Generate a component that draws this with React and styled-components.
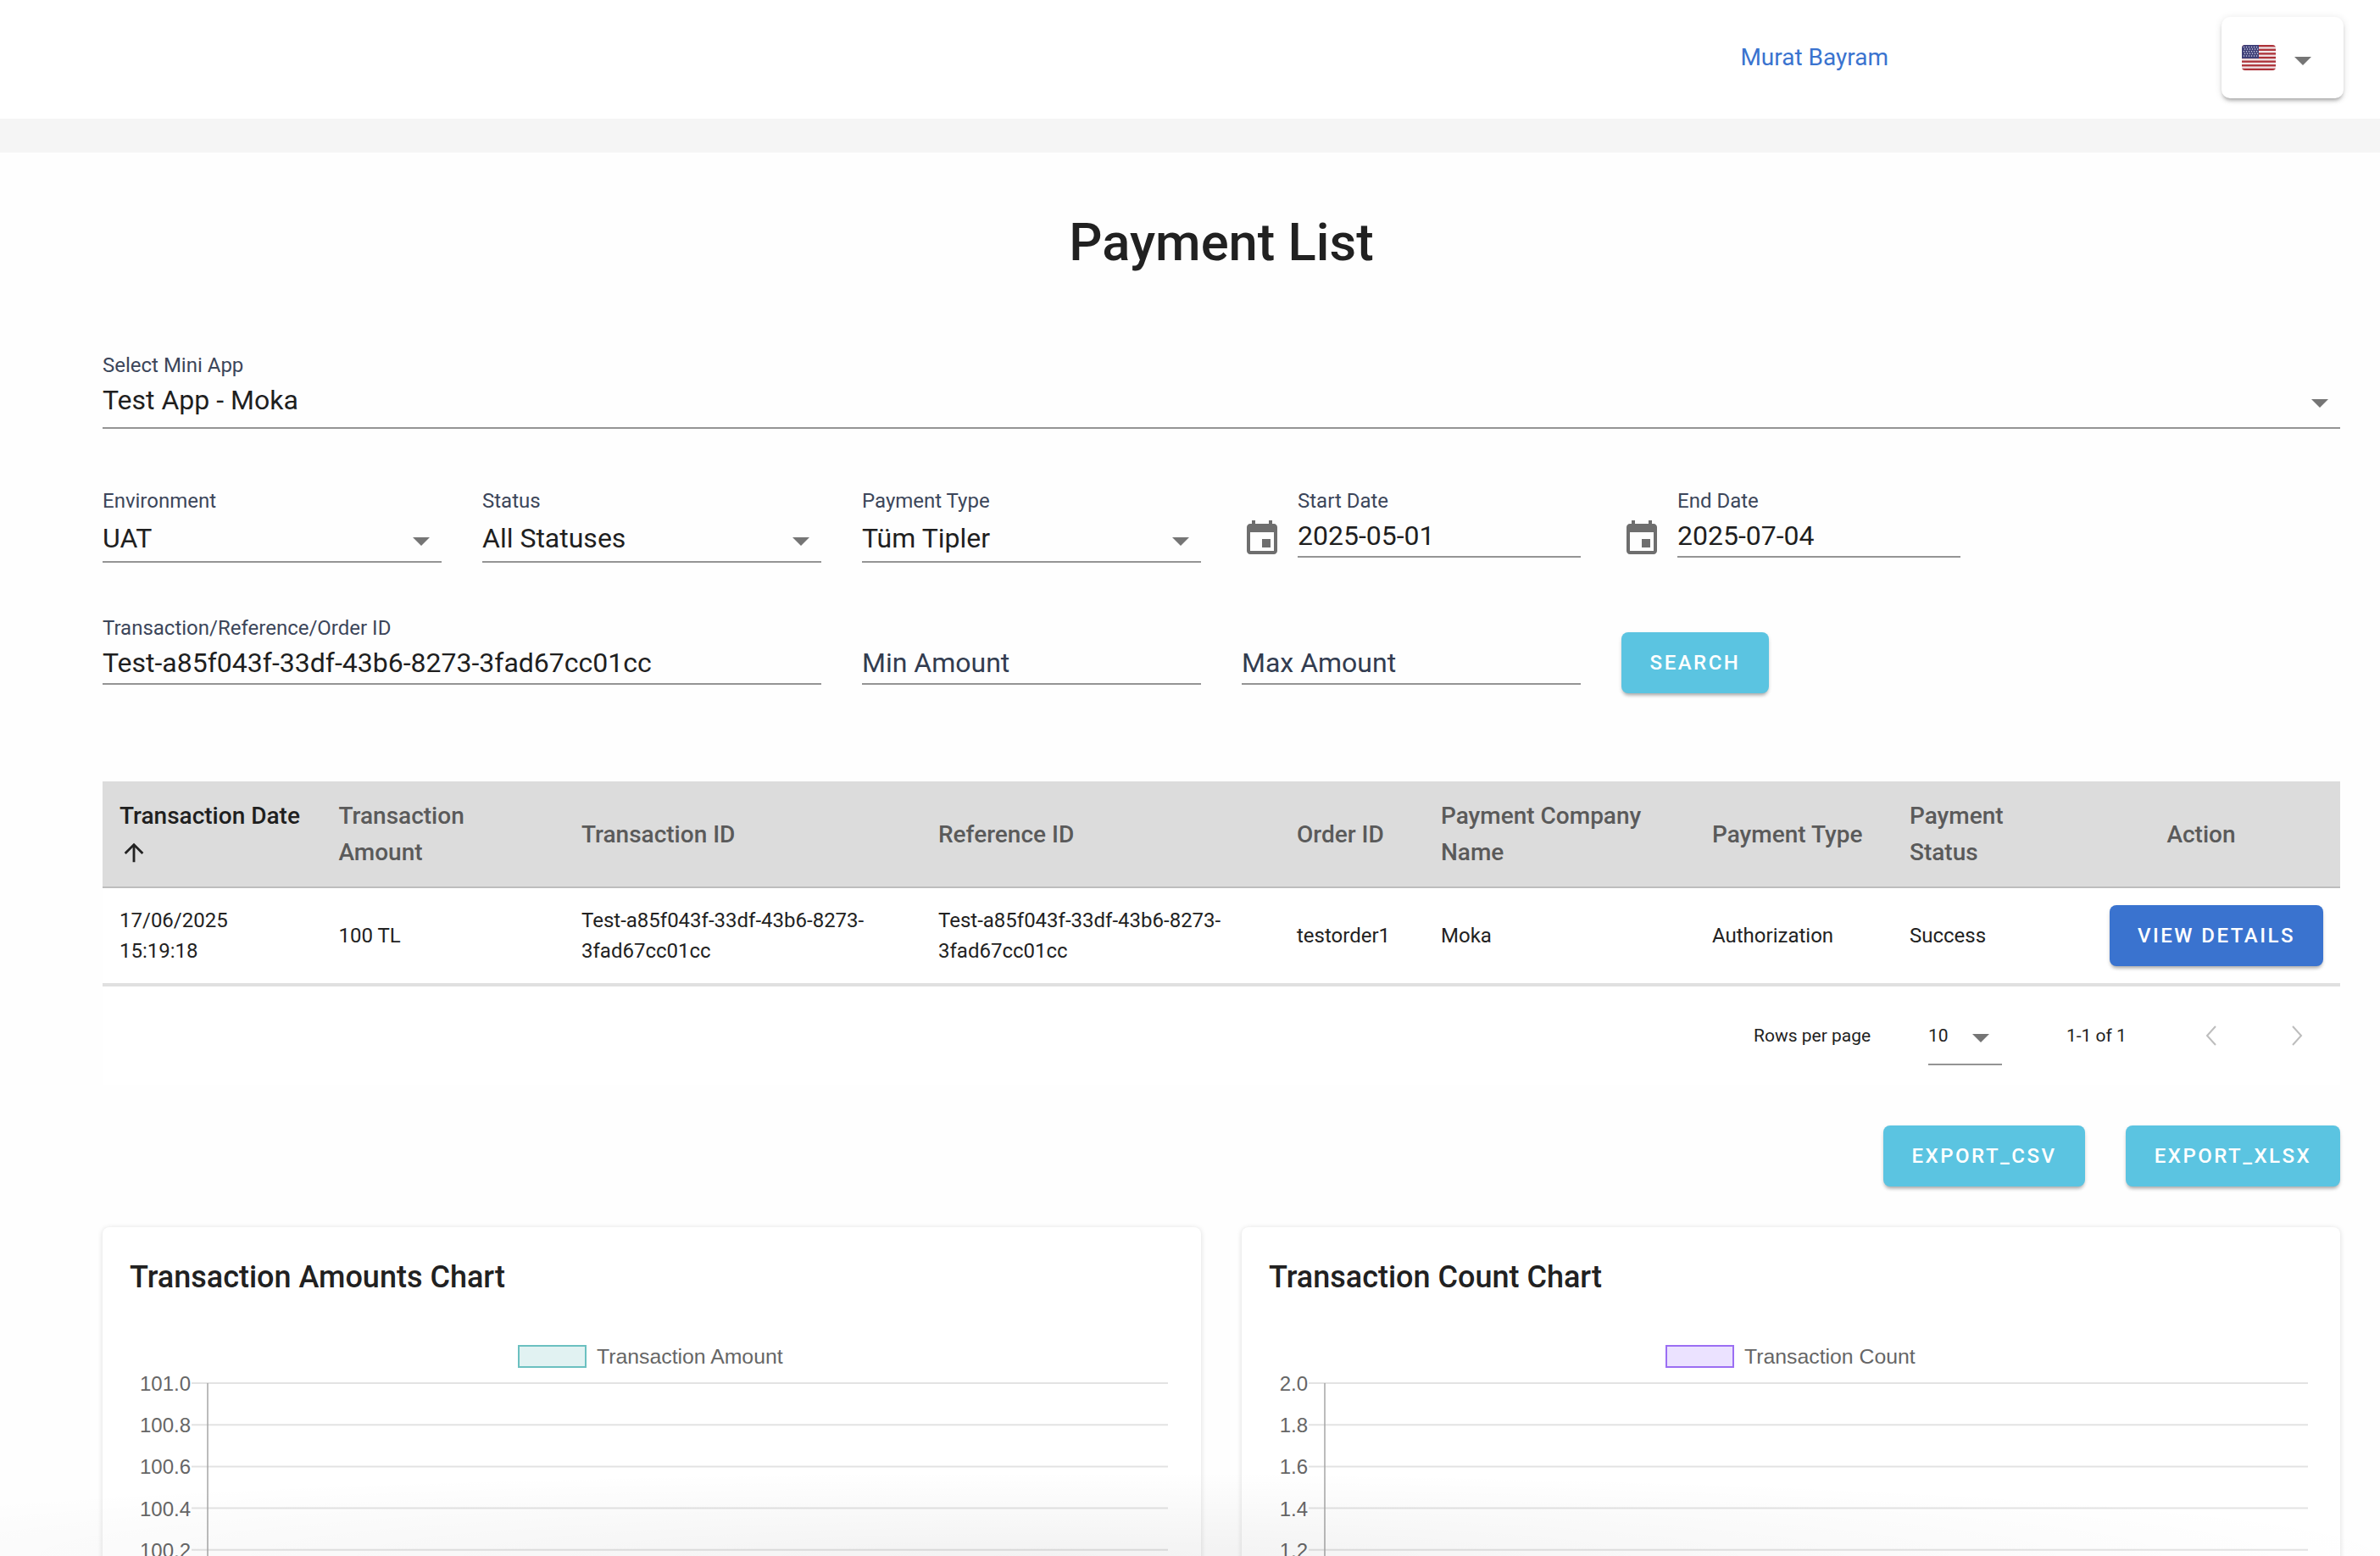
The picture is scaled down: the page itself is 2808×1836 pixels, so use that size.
import React from "react";
import styled, { createGlobalStyle } from "styled-components";

const GlobalStyle = createGlobalStyle`
  html, body {
    margin: 0;
    height: 100%;
    overflow: hidden;
    background: #fefefe;
    font-family: Roboto, "Noto Sans", sans-serif;
  }
  * { box-sizing: border-box; }
`;

const Page = styled.div`
  position: relative;
  height: 1836px;
  overflow: hidden;
`;

const BottomFade = styled.div`
  position: absolute;
  left: 0;
  right: 0;
  bottom: 0;
  height: 100px;
  pointer-events: none;
  background: radial-gradient(ellipse 58% 100% at 44% 100%, rgba(0, 0, 0, 0.05), rgba(0, 0, 0, 0) 100%);
`;

const Header = styled.header`
  height: 140px;
  background: #fff;
  display: flex;
  justify-content: flex-end;
  align-items: flex-start;
  padding: 20px 43px 0 0;
`;

const UserName = styled.a`
  color: #3a73cf;
  font-size: 28px;
  line-height: 96px;
  margin-right: 393px;
`;

const LangBox = styled.div`
  width: 144px;
  height: 96px;
  background: #fff;
  border-radius: 10px;
  box-shadow: 0 4px 5px -2px rgba(0, 0, 0, 0.35), 0 1px 10px rgba(0, 0, 0, 0.1);
  display: flex;
  align-items: center;
  padding-left: 24px;
  gap: 22px;
`;

const Band = styled.div`
  height: 40px;
  background: #f5f5f5;
`;

const Main = styled.main`
  padding: 70px 47px 0 121px;
`;

const Title = styled.h1`
  margin: 0 0 96px;
  text-align: center;
  font-size: 61.5px;
  line-height: 72px;
  font-weight: 500;
  color: #212121;
`;

const Filters = styled.div`
  display: grid;
  grid-template-columns: repeat(5, 400px);
  column-gap: 48px;
`;

const FilterRow = styled(Filters)`
  margin-top: ${p => p.$top}px;
`;

const Field = styled.div`
  grid-column: span ${p => p.$span || 1};
  min-width: 0;
`;

const WideField = styled.div`
  width: 100%;
`;

const Label = styled.label`
  display: block;
  height: 26px;
  line-height: 26px;
  font-size: 24px;
  color: #3c465a;
`;

const ValueRow = styled.div`
  display: flex;
  align-items: center;
  justify-content: space-between;
  margin-top: ${p => p.$mt}px;
  padding: 0 14px ${p => p.$pb}px 0;
  border-bottom: 2px solid #949494;
  box-sizing: content-box;
  height: 40px;
  font-size: 32px;
  line-height: 40px;
  color: ${p => (p.$placeholder ? "#323c50" : "#1f1f1f")};
`;

const Caret = styled.span`
  width: 0;
  height: 0;
  border-left: 10px solid transparent;
  border-right: 10px solid transparent;
  border-top: 10px solid #757575;
  margin-top: 8px;
`;

const DateField = styled.div`
  display: flex;
  align-items: flex-start;
`;

const DateIcon = styled.svg`
  width: 48px;
  height: 48px;
  fill: #6e6e6e;
  flex: none;
  margin: 34px 18px 0 0;
`;

const DateInner = styled.div`
  flex: 1;
`;

const ActionButton = styled.button`
  height: 72px;
  border: 0;
  border-radius: 8px;
  background: ${p => (p.$primary ? "#3a73cf" : "#5bc4e1")};
  color: #fff;
  font-family: inherit;
  font-size: 24px;
  font-weight: 500;
  letter-spacing: 2.5px;
  padding: 0;
  width: ${p => p.$w}px;
  text-transform: uppercase;
  box-shadow: 0 4px 4px -2px rgba(0, 0, 0, 0.3), 0 2px 5px rgba(0, 0, 0, 0.1);
`;

const SearchButton = styled(ActionButton)`
  margin-top: 18px;
`;

const TableWrap = styled.div`
  margin-top: 104px;
  background: #fff;
`;

const Table = styled.table`
  width: 100%;
  table-layout: fixed;
  border-collapse: collapse;
`;

const Col = styled.col`
  width: ${p => p.$w}px;
`;

const Th = styled.th`
  background: #dcdcdc;
  height: 125px;
  padding: 0 20px;
  border-bottom: 2px solid #bdbdbd;
  text-align: ${p => (p.$center ? "center" : "left")};
  font-size: 28px;
  line-height: 43px;
  font-weight: 500;
  color: ${p => (p.$active ? "#1f1f1f" : "#5a5a5a")};
`;

const Td = styled.td`
  height: 115px;
  padding: 0 20px;
  border-bottom: 4px solid #e0e0e0;
  font-size: 24px;
  line-height: 36px;
  color: #222;
  word-break: break-word;
`;

const ActionCell = styled(Td)`
  text-align: right;
`;

const SortIcon = styled.svg`
  display: block;
  width: 34px;
  height: 34px;
  margin: 5px 0 4px;
  fill: #222;
`;

const Pagination = styled.div`
  height: 116px;
  display: flex;
  align-items: center;
  font-size: 21px;
  color: #222;
  padding-left: 1948px;
`;

const RowsLabel = styled.span`
  flex: none;
  width: 206px;
`;

const RowsSelect = styled.div`
  position: relative;
  flex: none;
  width: 87px;
  height: 68px;
  align-self: flex-start;
  margin-top: 25px;
  padding-top: 20px;
  line-height: 26px;
  border-bottom: 2px solid #949494;
`;

const RowsCaret = styled(Caret)`
  position: absolute;
  right: 15px;
  top: 31px;
  margin: 0;
`;

const Range = styled.span`
  flex: none;
  margin-left: 76px;
  width: 164px;
`;

const PageIcon = styled.svg`
  flex: none;
  width: 14px;
  height: 24px;
  fill: none;
  stroke: #bdbdbd;
  stroke-width: 2;
  margin-right: 87px;
  &:last-child {
    margin-right: 0;
  }
`;

const ExportRow = styled.div`
  display: flex;
  justify-content: flex-end;
  gap: 48px;
  margin-top: 48px;
`;

const Charts = styled.div`
  display: grid;
  grid-template-columns: 1fr 1fr;
  gap: 48px;
  margin-top: 48px;
`;

const Card = styled.section`
  background: #fff;
  border-radius: 8px;
  box-shadow: 0 1px 6px rgba(0, 0, 0, 0.14);
  padding: 35px 32px 60px;
  height: 700px;
`;

const CardTitle = styled.h2`
  margin: 0 0 40px;
  font-size: 36px;
  line-height: 48px;
  font-weight: 500;
  color: #212121;
`;

const ChartSvg = styled.svg`
  display: block;
  overflow: visible;
`;

const ChartText = styled.text`
  font-family: "Liberation Sans", Arial, sans-serif;
  font-size: ${p => p.$size}px;
  fill: #666;
`;

const columns = [258.5, 286.5, 421, 423, 170, 320, 233, 200, 328];

function Flag() {
  const stripes = Array.from({ length: 7 }, (_, i) => i * 4.62);
  const stars = [];
  for (let r = 0; r < 5; r++) {
    for (let c = 0; c < 6; c++) {
      stars.push(<circle key={`${r}-${c}`} cx={2.5 + c * 3 + (r % 2) * 1} cy={2.5 + r * 2.6} r="0.75" fill="#d8d8e8" />);
    }
  }
  return (
    <svg width="40" height="30" viewBox="0 0 40 30">
      <clipPath id="flag-clip">
        <rect width="40" height="30" rx="4" />
      </clipPath>
      <g clipPath="url(#flag-clip)">
        <rect width="40" height="30" fill="#f0e6e8" />
        {stripes.map(y => (
          <rect key={y} y={y} width="40" height="2.3" fill="#ad3239" />
        ))}
        <rect width="20" height="16" fill="#3e3f78" />
        {stars}
      </g>
    </svg>
  );
}

function CalendarIcon() {
  return (
    <DateIcon viewBox="0 0 24 24">
      <path d="M17 12h-5v5h5v-5zM16 1v2H8V1H6v2H5c-1.11 0-1.99.9-1.99 2L3 19c0 1.1.89 2 2 2h14c1.1 0 2-.9 2-2V5c0-1.1-.9-2-2-2h-1V1h-2zm3 18H5V8h14v11z" />
    </DateIcon>
  );
}

function SelectField({ label, value }) {
  return (
    <Field>
      <Label>{label}</Label>
      <ValueRow $mt={11} $pb={7}>
        {value}
        <Caret />
      </ValueRow>
    </Field>
  );
}

function DateInput({ label, value }) {
  return (
    <Field>
      <DateField>
        <CalendarIcon />
        <DateInner>
          <Label>{label}</Label>
          <ValueRow $mt={8} $pb={4}>{value}</ValueRow>
        </DateInner>
      </DateField>
    </Field>
  );
}

function Chart({ width, legend, color, fill, legendX, legendW, axisX, right, ticks }) {
  const top = 61;
  const step = 49.2;
  return (
    <ChartSvg width={width} height={320} viewBox={`0 0 ${width} 320`}>
      <rect x={legendX + 1} y={17} width={legendW - 2} height={25} fill={fill} stroke={color} strokeWidth="2" />
      <ChartText $size={24.8} x={legendX + legendW + 12} y={38}>{legend}</ChartText>
      {ticks.map((t, i) => (
        <g key={t}>
          <line x1={axisX - 19} x2={right} y1={top + i * step} y2={top + i * step} stroke="#e3e3e3" strokeWidth="2" />
          <ChartText $size={24} x={axisX - 20} y={top + i * step + 9} textAnchor="end">{t}</ChartText>
        </g>
      ))}
      <line x1={axisX} x2={axisX} y1={top} y2={320} stroke="#a6a6a6" strokeWidth="1.5" />
    </ChartSvg>
  );
}

export default function App() {
  return (
    <Page>
      <GlobalStyle />
      <Header>
        <UserName>Murat Bayram</UserName>
        <LangBox>
          <Flag />
          <Caret />
        </LangBox>
      </Header>
      <Band />
      <Main>
        <Title>Payment List</Title>

        <WideField>
          <Label>Select Mini App</Label>
          <ValueRow $mt={8} $pb={12}>
            Test App - Moka
            <Caret />
          </ValueRow>
        </WideField>

        <FilterRow $top={72}>
          <SelectField label="Environment" value="UAT" />
          <SelectField label="Status" value="All Statuses" />
          <SelectField label="Payment Type" value="Tüm Tipler" />
          <DateInput label="Start Date" value="2025-05-01" />
          <DateInput label="End Date" value="2025-07-04" />
        </FilterRow>

        <FilterRow $top={64}>
          <Field $span={2}>
            <Label>Transaction/Reference/Order ID</Label>
            <ValueRow $mt={8} $pb={4}>Test-a85f043f-33df-43b6-8273-3fad67cc01cc</ValueRow>
          </Field>
          <Field>
            <Label />
            <ValueRow $mt={8} $pb={4} $placeholder>Min Amount</ValueRow>
          </Field>
          <Field>
            <Label />
            <ValueRow $mt={8} $pb={4} $placeholder>Max Amount</ValueRow>
          </Field>
          <div>
            <SearchButton $w={174}>Search</SearchButton>
          </div>
        </FilterRow>

        <TableWrap>
          <Table>
            <colgroup>
              {columns.map((w, i) => (
                <Col key={i} $w={w} />
              ))}
            </colgroup>
            <thead>
              <tr>
                <Th $active>
                  Transaction Date
                  <SortIcon viewBox="0 0 24 24">
                    <path d="M4 12l1.41 1.41L11 7.83V20h2V7.83l5.58 5.59L20 12l-8-8-8 8z" />
                  </SortIcon>
                </Th>
                <Th>Transaction Amount</Th>
                <Th>Transaction ID</Th>
                <Th>Reference ID</Th>
                <Th>Order ID</Th>
                <Th>Payment Company Name</Th>
                <Th>Payment Type</Th>
                <Th>Payment Status</Th>
                <Th $center>Action</Th>
              </tr>
            </thead>
            <tbody>
              <tr>
                <Td>17/06/2025 15:19:18</Td>
                <Td>100 TL</Td>
                <Td>Test-a85f043f-33df-43b6-8273-3fad67cc01cc</Td>
                <Td>Test-a85f043f-33df-43b6-8273-3fad67cc01cc</Td>
                <Td>testorder1</Td>
                <Td>Moka</Td>
                <Td>Authorization</Td>
                <Td>Success</Td>
                <ActionCell>
                  <ActionButton $primary $w={252}>View Details</ActionButton>
                </ActionCell>
              </tr>
            </tbody>
          </Table>
          <Pagination>
            <RowsLabel>Rows per page</RowsLabel>
            <RowsSelect>
              10
              <RowsCaret />
            </RowsSelect>
            <Range>1-1 of 1</Range>
            <PageIcon viewBox="0 0 14 24">
              <polyline points="12,1 2,12 12,23" />
            </PageIcon>
            <PageIcon viewBox="0 0 14 24">
              <polyline points="2,1 12,12 2,23" />
            </PageIcon>
          </Pagination>
        </TableWrap>

        <ExportRow>
          <ActionButton $w={238}>EXPORT_CSV</ActionButton>
          <ActionButton $w={253}>EXPORT_XLSX</ActionButton>
        </ExportRow>

        <Charts>
          <Card>
            <CardTitle>Transaction Amounts Chart</CardTitle>
            <Chart
              width={1232}
              legend="Transaction Amount"
              color="#6bc0c0"
              fill="#e1f2f2"
              legendX={458}
              legendW={81}
              axisX={92}
              right={1225}
              ticks={["101.0", "100.8", "100.6", "100.4", "100.2", "100.0"]}
            />
          </Card>
          <Card>
            <CardTitle>Transaction Count Chart</CardTitle>
            <Chart
              width={1232}
              legend="Transaction Count"
              color="#9b6ef3"
              fill="#ebe2ff"
              legendX={468}
              legendW={81}
              axisX={66}
              right={1226}
              ticks={["2.0", "1.8", "1.6", "1.4", "1.2", "1.0"]}
            />
          </Card>
        </Charts>
      </Main>
      <BottomFade />
    </Page>
  );
}
